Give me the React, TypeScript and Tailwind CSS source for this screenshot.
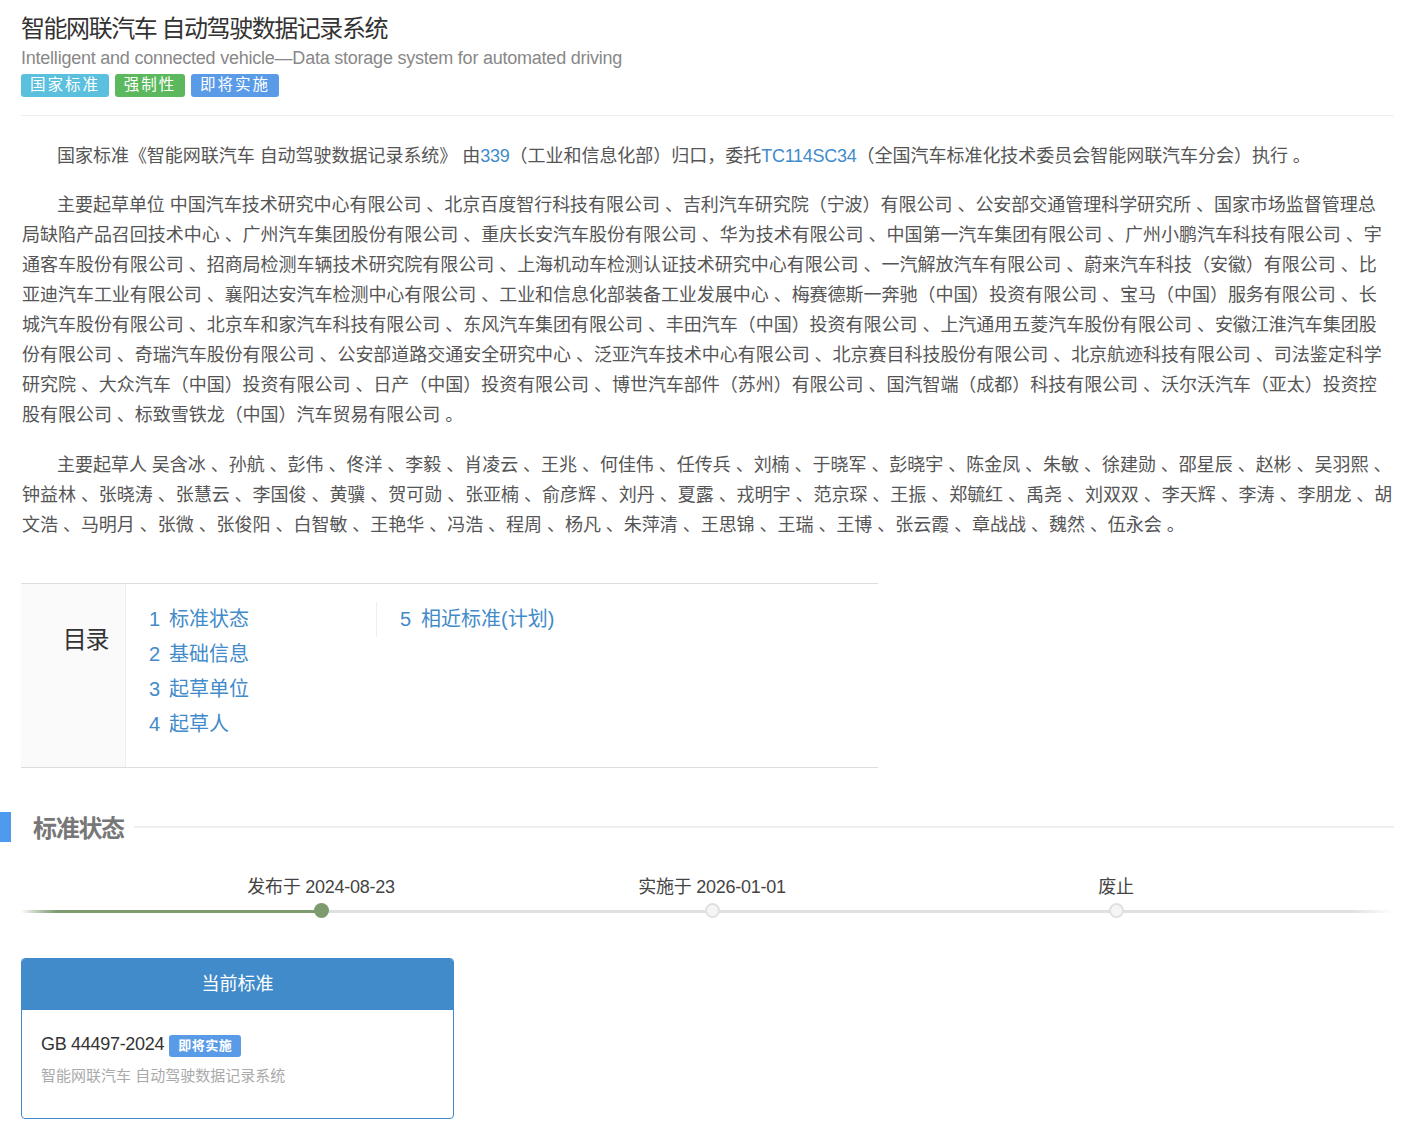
const font = { fontFamily: '"Liberation Sans", "Noto Sans CJK SC", sans-serif' };

const TOC1 = [["1", "标准状态"], ["2", "基础信息"], ["3", "起草单位"], ["4", "起草人"]];

const units = "主要起草单位 中国汽车技术研究中心有限公司 、北京百度智行科技有限公司 、吉利汽车研究院（宁波）有限公司 、公安部交通管理科学研究所 、国家市场监督管理总局缺陷产品召回技术中心 、广州汽车集团股份有限公司 、重庆长安汽车股份有限公司 、华为技术有限公司 、中国第一汽车集团有限公司 、广州小鹏汽车科技有限公司 、宇通客车股份有限公司 、招商局检测车辆技术研究院有限公司 、上海机动车检测认证技术研究中心有限公司 、一汽解放汽车有限公司 、蔚来汽车科技（安徽）有限公司 、比亚迪汽车工业有限公司 、襄阳达安汽车检测中心有限公司 、工业和信息化部装备工业发展中心 、梅赛德斯一奔驰（中国）投资有限公司 、宝马（中国）服务有限公司 、长城汽车股份有限公司 、北京车和家汽车科技有限公司 、东风汽车集团有限公司 、丰田汽车（中国）投资有限公司 、上汽通用五菱汽车股份有限公司 、安徽江淮汽车集团股份有限公司 、奇瑞汽车股份有限公司 、公安部道路交通安全研究中心 、泛亚汽车技术中心有限公司 、北京赛目科技股份有限公司 、北京航迹科技有限公司 、司法鉴定科学研究院 、大众汽车（中国）投资有限公司 、日产（中国）投资有限公司 、博世汽车部件（苏州）有限公司 、国汽智端（成都）科技有限公司 、沃尔沃汽车（亚太）投资控股有限公司 、标致雪铁龙（中国）汽车贸易有限公司 。";

const people = "主要起草人 吴含冰 、孙航 、彭伟 、佟洋 、李毅 、肖凌云 、王兆 、何佳伟 、任传兵 、刘楠 、于晓军 、彭晓宇 、陈金凤 、朱敏 、徐建勋 、邵星辰 、赵彬 、吴羽熙 、钟益林 、张晓涛 、张慧云 、李国俊 、黄骥 、贺可勋 、张亚楠 、俞彦辉 、刘丹 、夏露 、戎明宇 、范京琛 、王振 、郑毓红 、禹尧 、刘双双 、李天辉 、李涛 、李朋龙 、胡文浩 、马明月 、张微 、张俊阳 、白智敏 、王艳华 、冯浩 、程周 、杨凡 、朱萍清 、王思锦 、王瑞 、王博 、张云霞 、章战战 、魏然 、伍永会 。";

export default function App() {
  return (
    <div style={font} className="relative h-[1127px] overflow-hidden bg-white text-[#333]">
      <div className="pl-[21px] pr-[18px] pt-[12px]">
        <h1 className="text-[24px] leading-[34px] font-normal tracking-[-1.45px] text-[#333]">智能网联汽车 自动驾驶数据记录系统</h1>
        <div className="text-[18px] leading-[24px] tracking-[-0.23px] text-[#888]">Intelligent and connected vehicle—Data storage system for automated driving</div>
        <div className="mt-[4px] flex gap-[6px] pb-[18px] border-b border-[#eee]">
          <span className="h-[23px] w-[88px] rounded-[3px] bg-[#5bc0de] text-center text-[15.5px] leading-[21px] tracking-[2px] text-white">国家标准</span>
          <span className="h-[23px] w-[70px] rounded-[3px] bg-[#5cb85c] text-center text-[15.5px] leading-[21px] tracking-[2px] text-white">强制性</span>
          <span className="h-[23px] w-[88px] rounded-[3px] bg-[#5a9be8] text-center text-[15.5px] leading-[21px] tracking-[2px] text-white">即将实施</span>
        </div>

        <div className="mt-[25px] pl-[1px] pr-[1px] text-[18px] leading-[30px] tracking-[-0.03px] text-[#555]">
          <p className="indent-[35px]">国家标准《智能网联汽车 自动驾驶数据记录系统》 由<span className="tracking-[-0.25px] text-[#428bca]">339</span>（工业和信息化部）归口，委托<span className="tracking-[-0.25px] text-[#428bca]">TC114SC34</span>（全国汽车标准化技术委员会智能网联汽车分会）执行 。</p>
          <p className="mt-[19px] indent-[35px]">{units}</p>
          <p className="mt-[20px] indent-[35px]">{people}</p>
        </div>

        <div className="mt-[43px] flex h-[185px] w-[857px] border-y border-[#ddd]">
          <div className="w-[105px] shrink-0 border-r border-[#eee] bg-[#fafafa] pt-[39px] pr-[17px] text-right text-[24px] leading-[34px] tracking-[-1.4px] text-[#333]">目录</div>
          <div className="flex pt-[18px]">
            <div className="w-[250px] pl-[23px]">
              {TOC1.map(([n, t]) => (
                <div key={n} className="-mt-[1px] mb-[1px] flex h-[35px] items-center text-[20px] text-[#428bca]">
                  <span className="w-[20px]">{n}</span>
                  <span>{t}</span>
                </div>
              ))}
            </div>
            <div className="h-[35px] border-l border-[#eee] pl-[23px]">
              <div className="-mt-[1px] flex h-[35px] items-center text-[20px] text-[#428bca]">
                <span className="w-[21px]">5</span>
                <span>相近标准(计划)</span>
              </div>
            </div>
          </div>
        </div>
      </div>

      <div className="mt-[44px] flex h-[30px] items-center pr-[18px]">
        <div className="h-[30px] w-[11px] bg-[#4e9bee]" />
        <h2 className="ml-[22px] pt-[4px] text-[24px] font-bold tracking-[-1.3px] text-[#777]">标准状态</h2>
        <div className="ml-[10px] h-[2px] flex-1 bg-[#eee]" />
      </div>

      <div className="relative mx-[21px] mt-[32px] h-[55px] w-[1372px]">
        <div className="absolute left-0 right-0 top-[36px] h-[3px] bg-[linear-gradient(to_right,transparent,#e0e0e0_3%,#e0e0e0_97%,transparent)]" />
        <div className="absolute left-0 top-[36px] h-[3px] w-[300px] bg-[linear-gradient(to_right,transparent,#7d9b6f_12%)]" />
        <Step x={300} label="发布于 2024-08-23" done />
        <Step x={691} label="实施于 2026-01-01" />
        <Step x={1095} label="废止" />
      </div>

      <div className="ml-[21px] mt-[29px] h-[161px] w-[433px] overflow-hidden rounded-[4px] border border-[#428bca]">
        <div className="h-[51px] bg-[#428bca] text-center text-[18px] leading-[50px] text-white">当前标准</div>
        <div className="pl-[19px] pt-[21px]">
          <div className="flex items-start text-[18px] leading-[26px] text-[#333]">
            <span className="tracking-[-0.3px]">GB 44497-2024</span>
            <span className="ml-[5px] mt-[4px] h-[22px] w-[72px] rounded-[3px] bg-[#5a9be8] text-center text-[13px] font-bold leading-[22px] tracking-[0.5px] text-white">即将实施</span>
          </div>
          <div className="mt-[7px] text-[15px] leading-[24px] text-[#aaa]">智能网联汽车 自动驾驶数据记录系统</div>
        </div>
      </div>
    </div>
  );
}

function Step({ x, label, done }: { x: number; label: string; done?: boolean }) {
  return (
    <div className="absolute top-0 flex w-0 flex-col items-center" style={{ left: x }}>
      <div className="h-[27px] whitespace-nowrap text-[18px] leading-[27px] tracking-[-0.25px] text-[#444]">{label}</div>
      <div className={done ? "mt-[2px] h-[15px] w-[15px] shrink-0 rounded-full bg-[#7d9b6f]" : "mt-[2px] h-[15px] w-[15px] shrink-0 rounded-full border-2 border-[#e0e0e0] bg-[#f5f5f5]"} />
    </div>
  );
}
